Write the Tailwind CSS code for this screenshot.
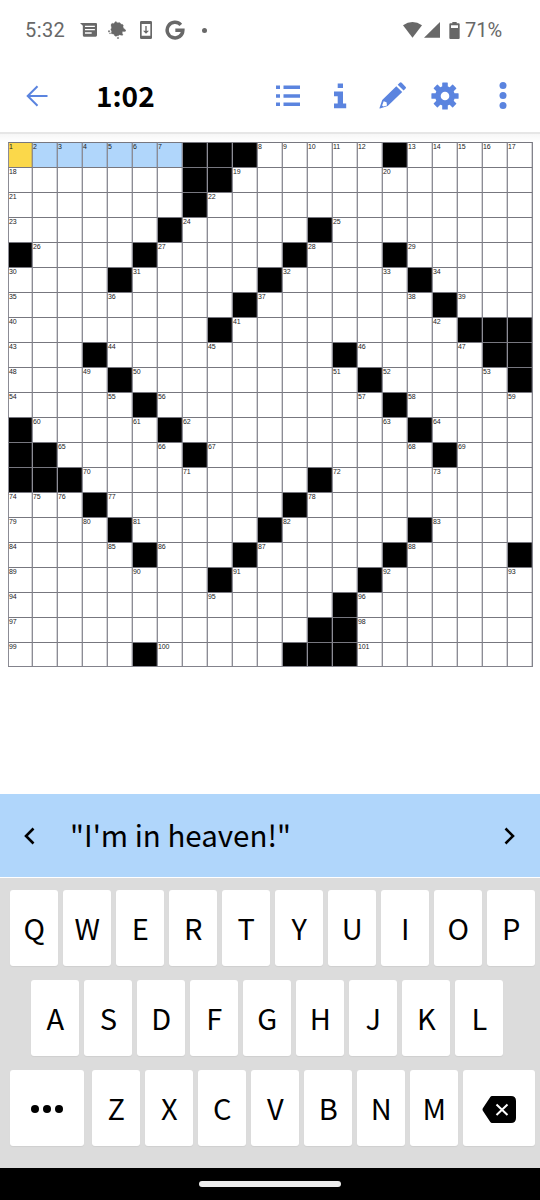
<!DOCTYPE html>
<html lang="en">
<head>
<meta charset="utf-8">
<title>Crossword</title>
<script src="https://cdn.jsdelivr.net/npm/@tailwindcss/browser@4"></script>
</head>
<body class="bg-white">
<div class="w-[540px] h-[1200px] overflow-hidden flex flex-col bg-white text-black font-['Noto_Sans_CJK_JP','Noto_Sans',sans-serif]">

  <!-- Status bar -->
  <div class="h-[60px] flex items-center text-[#686868] font-[Roboto,sans-serif] text-[20px] shrink-0">
    <span class="ml-[25px] w-[55px] tracking-[0.4px] leading-none">5:32</span>
    <svg class="w-[17px] h-3.5" viewBox="0 0 48 42" preserveAspectRatio="none" fill="currentColor"><path fill-rule="evenodd" d="M0 0H45Q48 0 48 3V37Q48 41 44 41H11Q8 41 8 37V8ZM14 8V12H42V8ZM14 18V22H42V18ZM14 28V32H33V28Z"/></svg>
    <svg class="ml-[11px] w-[18px] h-[18px]" viewBox="0 0 54 54" fill="currentColor" stroke="currentColor" stroke-linejoin="round" stroke-width="1"><path d="M13 7Q17 9 19 6Q22 0 25 2Q28 7 31 5Q37 3 39 10Q44 8 46 13Q44 18 46 21Q54 27 54 29Q50 33 44 31Q40 36 45 42Q42 44 35 41Q32 45 28 44Q22 48 19 43Q19 40 16 39Q9 39 9 36Q13 33 10 29Q7 26 9 24Q12 21 10 17Q7 9 13 7Z"/><circle cx="3" cy="31" r="2.500"/><circle cx="6" cy="37" r="1.500"/><circle cx="30" cy="51" r="2.500"/></svg>
    <svg class="ml-[14px] w-3 h-[18px]" viewBox="0 0 36 54" fill="currentColor"><path fill-rule="evenodd" d="M4 0H32Q36 0 36 4V50Q36 54 32 54H4Q0 54 0 50V4Q0 0 4 0ZM5 9V44H31V9Z"/><path d="M16 15H20V29H27L18 38L9 29H16Z"/></svg>
    <svg class="ml-[13px] w-[20px] h-5" viewBox="0 0 60 60" fill="none" stroke="currentColor" stroke-width="10.500"><path d="M47.500 14.500A23.500 23.500 0 1 0 53.500 31H31"/></svg>
    <svg class="ml-[17px] w-[5px] h-[5px]" viewBox="0 0 10 10" fill="currentColor"><circle cx="5" cy="5" r="5"/></svg>
    <svg class="ml-[196px] w-[19px] h-4" viewBox="0 0 57 48" fill="currentColor"><path d="M0 10Q28.500 -10 57 10L28.500 47Z"/></svg>
    <svg class="ml-[2px] w-4 h-4" viewBox="0 0 48 48" fill="currentColor"><path d="M48 0V47H0Z"/></svg>
    <svg class="ml-[9px] w-[11px] h-[17px]" viewBox="0 0 33 51" fill="currentColor"><path fill-rule="evenodd" d="M10 0H23V4H29Q32 4 32 7V48Q32 51 29 51H4Q1 51 1 48V7Q1 4 4 4H10ZM6 10V18H27V10Z"/></svg>
    <span class="ml-[5px] leading-none">71%</span>
  </div>

  <!-- App bar -->
  <div class="h-[72px] flex items-center text-[#5b84df] shrink-0">
    <svg class="ml-[26px] w-[22px] h-[22px]" viewBox="0 0 22 22" fill="none" stroke="currentColor" stroke-width="2"><path d="M11.500 1.200L1.700 11L11.500 20.800M2 11H21.500"/></svg>
    <span class="ml-[48px] w-[180px] -mt-0.5 text-black font-bold text-[28px] leading-none">1:02</span>
    <svg class="w-6 h-[22px]" viewBox="0 0 24 22" fill="currentColor"><path d="M0 .5H4V4H0ZM7.500 .5H24V4H7.500ZM0 9.300H4V12.700H0ZM7.500 9.300H24V12.700H7.500ZM0 17.500H4V21H0ZM7.500 17.500H24V21H7.500Z"/></svg>
    <svg class="ml-[33px] w-[14px] h-[26px]" viewBox="0 0 14 26" fill="currentColor"><path d="M4.700 .5H10V5H4.700ZM1 8.500H10V20.500H13.200V25.300H1V20.500H4.700V13.200H1Z"/></svg>
    <svg class="ml-[32px] w-7 h-7 -mt-0.5" viewBox="0 0 28 28" fill="currentColor"><path d="M20.700 1.800Q21.700 .800 22.700 1.800L26.700 5.900Q27.500 6.700 26.600 7.600L24.600 9.600L18.700 3.800ZM17.300 5.200L23.200 11L8.700 25L1 27.600Q.4 27.600 .5 27L3.200 18.900ZM4.700 20.200L3.100 24.600L4.400 25.600L8 24.500L7.500 21.300Z"/></svg>
    <svg class="ml-[24px] w-7 h-7 -mt-px" viewBox="-14 -14 28 28" fill="currentColor"><g><rect x="-2.800" y="-13.600" width="5.600" height="27.200" rx=".6"/><rect x="-2.800" y="-13.600" width="5.600" height="27.200" rx=".6" transform="rotate(45)"/><rect x="-2.800" y="-13.600" width="5.600" height="27.200" rx=".6" transform="rotate(90)"/><rect x="-2.800" y="-13.600" width="5.600" height="27.200" rx=".6" transform="rotate(135)"/><circle r="9.900"/></g><circle r="4.300" fill="#fff"/></svg>
    <svg class="ml-[40px] w-2 h-7" viewBox="0 0 8 28" fill="currentColor"><circle cx="4" cy="3.500" r="3.500"/><circle cx="4" cy="13.500" r="3.500"/><circle cx="4" cy="23.500" r="3.500"/></svg>
  </div>
  <div class="h-[10px] shrink-0 border-t-2 border-[#e6e6e6] bg-linear-to-b from-[#f6f6f6] to-white"></div>

  <!-- Board -->
  <div id="board" class="ml-2 w-[525px] h-[525px] shrink-0 grid grid-cols-[24px_repeat(20,25px)] grid-rows-[repeat(20,25px)_24px] border-r border-b border-[#83838c] font-['Liberation_Sans',sans-serif] text-[7px] leading-none tracking-[-0.1px] text-[#222]"></div>

  <!-- Clue -->
  <div class="mt-[127px] h-[83px] shrink-0 bg-[#b0d6fb] flex items-center">
    <svg class="ml-[23px] w-3 h-[18px]" viewBox="0 0 12 18" fill="none" stroke="currentColor" stroke-width="2.600"><path d="M10.500 1.500L3 9L10.500 16.500"/></svg>
    <span class="ml-[35px] w-[433px] -mt-0.5 text-[29.500px] leading-none whitespace-nowrap">"I'm in heaven!"</span>
    <svg class="w-3 h-[18px]" viewBox="0 0 12 18" fill="none" stroke="currentColor" stroke-width="2.600"><path d="M2.500 1.500L10 9L2.500 16.500"/></svg>
  </div>

  <!-- Keyboard -->
  <div class="mt-px h-[290px] shrink-0 bg-[#dcdcdc] pt-3 flex flex-col gap-[14px] text-[29px]">
    <div id="row1" class="flex gap-[5px] pl-[10.300px]"></div>
    <div id="row2" class="flex gap-[5px] pl-[31.300px]"></div>
    <div class="flex pl-[10.300px]">
      <div class="w-[74px] h-[76px] pt-0.5 rounded-[3px] bg-white shadow-[0_1px_1px_#cfcfcf] flex items-center justify-center gap-1">
        <i class="w-2 h-2 rounded-full bg-black"></i><i class="w-2 h-2 rounded-full bg-black"></i><i class="w-2 h-2 rounded-full bg-black"></i>
      </div>
      <div id="row3" class="flex gap-[5px] ml-2 mr-[5px]"></div>
      <div class="w-[71.300px] h-[76px] pt-0.5 rounded-[3px] bg-white shadow-[0_1px_1px_#cfcfcf] flex items-center justify-center">
        <svg class="w-[34px] h-[27px]" viewBox="0 0 34 27"><path d="M10 0H29Q34 0 34 5V22Q34 27 29 27H10Q9 27 8.300 26L1 15Q0 13.500 1 12L8.300 1Q9 0 10 0Z"/><path d="M14.500 8.500L25.500 19M25.500 8.500L14.500 19" stroke="#fff" stroke-width="2"/></svg>
      </div>
    </div>
  </div>

  <!-- Navigation bar -->
  <div class="h-8 shrink-0 bg-black flex justify-center items-center">
    <div class="w-[142px] h-[5.500px] rounded-full bg-[#ececec]"></div>
  </div>
</div>

<script>
  const rows = [
    '.......###.....#.....',
    '.......##............',
    '.......#.............',
    '......#.....#........',
    '#....#.....#...#.....',
    '....#.....#.....#....',
    '.........#.......#...',
    '........#.........###',
    '...#.........#.....##',
    '....#.........#.....#',
    '.....#.........#.....',
    '#.....#.........#....',
    '##.....#.........#...',
    '###.........#........',
    '...#.......#.........',
    '....#.....#.....#....',
    '.....#...#.....#....#',
    '........#.....#......',
    '.............#.......',
    '............##.......',
    '.....#.....###.......'
  ];
  const blocked = (r, c) => r < 0 || c < 0 || rows[r][c] === '#';
  let n = 0, html = '';
  rows.forEach((line, r) => [...line].forEach((ch, c) => {
    let fill = 'bg-white', label = '';
    if (ch === '#') fill = 'bg-black';
    else {
      if (blocked(r, c - 1) || blocked(r - 1, c)) label = ++n;
      if (r === 0 && c === 0) fill = 'bg-[#fbd84a]';
      else if (r === 0 && c < 7) fill = 'bg-[#b0d6fb]';
    }
    const edge = ch === '#' ? 'shadow-[inset_-1px_0_0_#2a2a2e]' : 'shadow-[inset_-1px_0_0_#6a6a7548]';
    html += `<div class="border-l border-t border-l-[#8c8c95] border-t-[#77777f] ${edge} whitespace-nowrap ${fill}">${label}</div>`;
  }));
  document.getElementById('board').innerHTML = html;

  const keys = (id, letters) => document.getElementById(id).innerHTML = [...letters].map(l =>
    `<div class="w-12 h-[76px] pb-0.5 rounded-[3px] bg-white shadow-[0_1px_1px_#cfcfcf] flex items-center justify-center leading-none">${l}</div>`).join('');
  keys('row1', 'QWERTYUIOP');
  keys('row2', 'ASDFGHJKL');
  keys('row3', 'ZXCVBNM');
</script>
</body>
</html>
